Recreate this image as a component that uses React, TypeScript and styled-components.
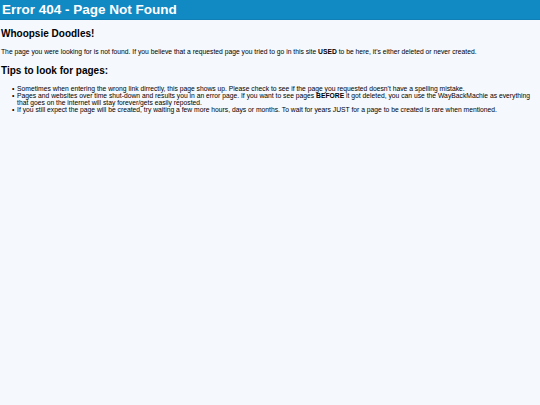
import styled, { createGlobalStyle } from "styled-components";

const GlobalStyle = createGlobalStyle`
  html, body {
    margin: 0;
    padding: 0;
    background: #f5f8fc;
    font-family: "Liberation Sans", Arial, sans-serif;
    color: #000;
  }
`;

const tips = [
  <>Sometimes when entering the wrong link dirrectly, this page shows up. Please check to see if the page you requested doesn't have a spelling mistake.</>,
  <>Pages and websites over time shut-down and results you in an error page. If you want to see pages <b>BEFORE</b> it got deleted, you can use the WayBackMachie as everything that goes on the internet will stay forever/gets easily reposted.</>,
  <>If you still expect the page will be created, try waiting a few more hours, days or months. To wait for years JUST for a page to be created is rare when mentioned.</>,
];

const App = () => {
  return (
    <Page>
      <GlobalStyle />
      <Header>Error 404 - Page Not Found</Header>
      <Content>
        <Heading>Whoopsie Doodles!</Heading>
        <Text>
          The page you were looking for is not found. If you believe that a requested page you tried to go in this site <b>USED</b> to be here, it's either deleted or never created.
        </Text>
        <Heading>Tips to look for pages:</Heading>
        <TipList>
          {tips.map((tip, index) => (
            <Tip key={index}>{tip}</Tip>
          ))}
        </TipList>
      </Content>
    </Page>
  );
};

export default App;

const Page = styled.div`
  min-height: 405px;
`;

const Header = styled.div`
  background: #118ac4;
  color: #fff;
  font-weight: bold;
  font-size: 13.5px;
  height: 19px;
  line-height: 19px;
  padding-left: 2px;
  border-bottom: 1px solid #0f7fb5;
`;

const Content = styled.div`
  padding: 0 1px;
`;

const Heading = styled.h2`
  font-size: 10px;
  font-weight: bold;
  line-height: 12px;
  margin: 8px 0 8px;
`;

const Text = styled.p`
  font-size: 6.75px;
  line-height: 8px;
  margin: 0 0 9px;
`;

const TipList = styled.ul`
  font-size: 6.75px;
  margin: 8px 0 0;
  padding: 0;
  list-style: none;
`;

const Tip = styled.li`
  line-height: 7px;
  padding-left: 16px;
  text-indent: -5px;

  &::before {
    content: "•";
    display: inline-block;
    width: 5px;
    text-indent: 0;
  }
`;
